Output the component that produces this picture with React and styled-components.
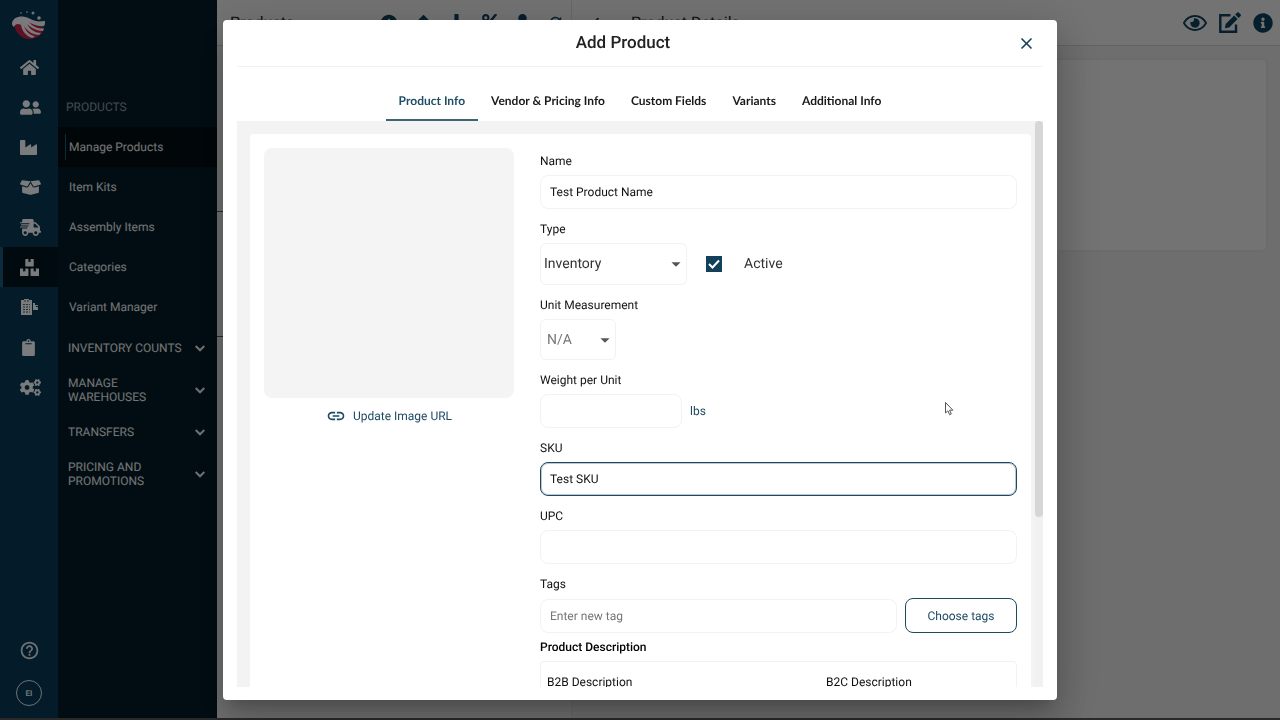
import styled, { createGlobalStyle } from 'styled-components';
import { useState } from 'react';
import {
    FaHome, FaUserFriends, FaIndustry, FaBoxOpen, FaShippingFast, FaBoxes,
    FaClipboard, FaCogs, FaRegEye, FaInfoCircle,
    FaArrowUp, FaDownload, FaPercent, FaUser,
} from 'react-icons/fa';
import {
    MdHelpOutline, MdClose, MdLink, MdRefresh, MdArrowDropDown, MdChevronLeft, MdAddCircle,
} from 'react-icons/md';

const GlobalStyle = createGlobalStyle`
    * {
        box-sizing: border-box;
    }

    body {
        margin: 0;
        font-family: Roboto, 'Liberation Sans', sans-serif;
        font-size: 12px;
        color: #111;
        text-rendering: geometricPrecision;
    }

    button, input, select {
        font-family: inherit;
        font-size: inherit;
        color: inherit;
        text-rendering: inherit;
    }
`;

const Page = styled.div`
    display: flex;
    height: 100vh;
    overflow: hidden;
    background: #dcdcdc;
    border-bottom: 2px solid #555;
`;

/* ---------- side navigation ---------- */

const Rail = styled.nav`
    flex: 0 0 58px;
    display: flex;
    flex-direction: column;
    background: #083752;
`;

const LogoLink = styled.a`
    height: 47px;
    padding-top: 3px;
    display: flex;
    align-items: center;
    justify-content: center;
`;

const RailLink = styled.a`
    height: 40px;
    display: flex;
    align-items: center;
    padding-left: 17px;
    border-left: 3px solid ${props => props.$active ? '#1a5876' : 'transparent'};
    background: ${props => props.$active ? '#03141e' : 'transparent'};
    color: #f4f6f8;
    font-size: ${props => props.$size}px;
`;

const RailFooter = styled.div`
    margin-top: auto;
    padding-bottom: 12px;
    display: flex;
    flex-direction: column;
    align-items: center;
    gap: 19px;
`;

const RailButton = styled.button`
    display: flex;
    padding: 0;
    border: none;
    background: none;
    color: #dfe5e8;
    font-size: 21px;
`;

const Avatar = styled.button`
    width: 26px;
    height: 26px;
    padding: 0;
    border: 1px solid #dfe5e8;
    border-radius: 50%;
    background: none;
    color: #dfe5e8;
    font-size: 8px;
    font-weight: 700;
`;

const SubNav = styled.nav`
    flex: 0 0 159px;
    padding-top: 87px;
    background: #041b27;
    color: #e6e9ea;
`;

const SubNavTitle = styled.h2`
    margin: 0;
    padding-left: 8px;
    font-size: 12px;
    font-weight: 400;
    line-height: 40px;
    color: #87949b;
`;

const SubNavLink = styled.a`
    display: flex;
    align-items: center;
    height: 40px;
    padding: 7px;
    background: ${props => props.$active ? '#020d13' : 'transparent'};
    color: inherit;
    text-decoration: none;

    span {
        padding-left: 3px;
        line-height: 26px;
        border-left: 1px solid ${props => props.$active ? '#1a5876' : 'transparent'};
    }
`;

const SubNavGroup = styled.button`
    display: flex;
    align-items: center;
    justify-content: space-between;
    width: 100%;
    height: 42px;
    padding: 0 12px 0 10px;
    border: none;
    background: none;
    line-height: 14px;
    text-align: left;

    span {
        max-width: 116px;
    }
`;

/* ---------- page behind the dialog ---------- */

const ListPane = styled.section`
    flex: 0 0 355px;
    background: #e2e2e2;
    border-right: 1px solid #cfcfcf;
`;

const DetailPane = styled.main`
    flex: 1;
    min-width: 0;
`;

const PaneHeader = styled.header`
    display: flex;
    align-items: center;
    gap: ${props => props.$wide ? '11px' : '16px'};
    height: 46px;
    padding: 0 7px 0 13px;
    background: #e6e6e6;
    border-bottom: 1px solid #c4c4c4;
    color: #0d3f58;

    h1 {
        flex: 1;
        margin: 0;
        padding-left: ${props => props.$wide ? '13px' : '0'};
        font-size: 16px;
        font-weight: 400;
        color: #222;
    }
`;

const HeaderButton = styled.button`
    display: flex;
    padding: 0;
    border: none;
    background: none;
    font-size: ${props => props.$size || 17}px;
`;

const ListRow = styled.div`
    height: ${props => props.$first ? '166px' : '125px'};
    border-bottom: 1px solid #555;
`;

const DetailCard = styled.div`
    height: 190px;
    margin: 14px;
    border-radius: 4px;
    background: #e6e6e6;
    box-shadow: 0 0 3px #ccc;
`;

/* ---------- dialog ---------- */

const Backdrop = styled.div`
    position: fixed;
    inset: 0;
    display: flex;
    justify-content: center;
    padding: 20px 0;
    background: rgba(0, 0, 0, 0.5);
`;

const Dialog = styled.div`
    display: flex;
    flex-direction: column;
    width: calc(65% + 2px);
    padding: 0 14px 13px;
    border-radius: 4px;
    background: #fff;
    box-shadow: 0 11px 15px -7px rgba(0, 0, 0, 0.2), 0 24px 38px 3px rgba(0, 0, 0, 0.14),
        0 9px 46px 8px rgba(0, 0, 0, 0.12);
`;

const DialogHeader = styled.header`
    display: grid;
    grid-template-columns: 1fr 34px;
    align-items: center;
    height: 47px;
    flex: none;
    border-bottom: 1px solid #f1f1f1;

    h2 {
        margin: 0;
        font-size: 17px;
        font-weight: 500;
        line-height: 22px;
        text-align: center;
        color: #222;
    }
`;

const CloseButton = styled.button`
    display: flex;
    justify-content: center;
    padding: 0;
    border: none;
    background: none;
    color: #12405a;
    font-size: 19px;
`;

const TabList = styled.div`
    display: flex;
    justify-content: center;
    flex: none;
    padding-top: 14px;
`;

const Tab = styled.button`
    height: 40px;
    padding: 0 13px;
    border: none;
    border-bottom: 2px solid ${props => props.$active ? '#3f6377' : 'transparent'};
    background: none;
    font-family: Lato, 'Open Sans', sans-serif;
    font-weight: 700;
    color: ${props => props.$active ? '#1f4e66' : '#1a1a1a'};
`;

const ScrollArea = styled.div`
    display: flex;
    flex: 1;
    min-height: 0;
    background: #f3f3f3;
`;

const ScrollContent = styled.div`
    flex: 1;
    min-width: 0;
    overflow: hidden;
    padding: 13px 4px 0 13px;
`;

const ScrollBar = styled.div`
    flex: 0 0 8px;
    background: #f1f1f1;
`;

const ScrollThumb = styled.div`
    height: 70%;
    border-radius: 4px;
    background: #d6d6d6;
`;

const FormCard = styled.form`
    display: grid;
    grid-template-columns: 250px minmax(0, 1fr);
    gap: 26px;
    align-items: start;
    padding: 13px 14px;
    border-radius: 4px;
    background: #fff;
`;

const ImageColumn = styled.div`
    display: flex;
    flex-direction: column;
    align-items: center;
    gap: 8px;
    padding-top: 1px;
`;

const ImageBox = styled.div`
    width: 100%;
    aspect-ratio: 1;
    border-radius: 8px;
    background: #f4f4f4;
`;

const ImageLink = styled.a`
    display: flex;
    align-items: center;
    gap: 7px;
    color: #1d4a63;
    text-decoration: none;

    svg {
        font-size: 20px;
    }
`;

const Field = styled.div`
    margin-bottom: ${props => props.$tight ? '0' : '6px'};
`;

const Label = styled.label`
    display: block;
    line-height: 28px;
`;

const Row = styled.div`
    display: flex;
    align-items: center;
    gap: ${props => props.$gap || 8}px;
    color: #1d4a63;
`;

const TextInput = styled.input`
    display: block;
    width: ${props => props.$short ? '142px' : '100%'};
    min-width: 0;
    height: 34px;
    padding: 0 9px;
    border: 1px solid #f2f2f2;
    border-radius: 8px;
    outline: none;
    background: #fff;
    color: #111;

    &:focus {
        border: 1px solid #1d4a63;
        box-shadow: inset 0 0 0 1px rgba(29, 74, 99, 0.3);
    }

    &::placeholder {
        color: #757575;
    }
`;

const SelectBox = styled.div`
    position: relative;
    width: ${props => props.$small ? '76px' : '147px'};

    select {
        width: 100%;
        height: ${props => props.$small ? '41px' : '42px'};
        padding: 0 ${props => props.$small ? '6px' : '3px'};
        border: 1px solid #f2f2f2;
        border-radius: 6px;
        appearance: none;
        background: #fff;
        color: ${props => props.$small ? '#777' : '#333'};
        font-size: 14px;
    }

    svg {
        position: absolute;
        top: 10px;
        right: 0;
        color: #555;
        font-size: 22px;
        pointer-events: none;
    }
`;

const CheckLabel = styled.label`
    display: flex;
    align-items: center;
    gap: 22px;
    color: #333;
    font-size: 14px;
`;

const CheckBox = styled.span`
    position: relative;
    display: flex;

    input {
        width: 16px;
        height: 16px;
        margin: 0;
        appearance: none;
        border: 2px solid #12405a;
    }

    input:checked {
        background: #12405a;
    }

    svg {
        position: absolute;
        inset: 0;
        pointer-events: none;
    }
`;

const OutlineButton = styled.button`
    flex: none;
    width: 112px;
    height: 35px;
    border: 1px solid #1d4a63;
    border-radius: 8px;
    background: #fff;
    color: #1d4a63;
`;

const SectionTitle = styled.h3`
    margin: 0;
    font-size: 12px;
    font-weight: 500;
    line-height: 28px;
    color: #000;
`;

const DescriptionBox = styled.div`
    display: grid;
    grid-template-columns: 279px 1fr;
    min-height: 120px;
    padding: 6px;
    border: 1px solid #f2f2f2;
    border-radius: 4px;
`;

const Pointer = styled.svg`
    position: fixed;
    left: 944px;
    top: 401px;
    pointer-events: none;
`;

const Logo = () => (
    <svg width="34" height="30" viewBox="0 0 34 30" aria-label="Home">
        <path d="M2 14 C3 22 9 29 17 29 C25 29 30 25 32 18 L20 13 Z" fill="#c21f45" />
        <path d="M0 13 C1 8 6 6 11 6.500 C16 7 19 10 24 11 C28 12 31 11 33 11 C33 13 33 15 32 16 C26 17 20 14 17 12
            C21 17 27 19 32 18.500 L31 21 C25 21 19 18 15 14 C18 20 24 23 29 23 L27 25 C21 25 15 21 12 16
            C14 22 18 25 23 26.500 L20 28 C14 26 10 21 9 15 C6 13 3 14 2 17 C0 16 0 14 0 13 Z" fill="#f5f3f6" />
        <circle cx="9" cy="3" r="1" fill="#8fb0c8" />
        <circle cx="15" cy="2" r="1" fill="#8fb0c8" />
        <circle cx="21" cy="3" r="1.500" fill="#d7e3ec" />
        <circle cx="27" cy="8" r="1.800" fill="#eef3f6" />
    </svg>
);

const ReportIcon = () => (
    <svg width="19" height="18" viewBox="0 0 19 18" fill="currentColor">
        <path d="M1 2h3V1h5v1h3v15H1z" />
        <path d="M13 5h2v2h3v1h-2v1h2v3h-5z" />
        <path d="M4 3h5M3 6.500h7M3 9h7M3 11.500h7M3 14h7" stroke="#44606f" strokeDasharray="2 1" />
    </svg>
);

const EditIcon = () => (
    <svg width="24" height="22" viewBox="0 0 24 22" fill="currentColor">
        <path d="M12.500 3.200H2.300V19.700H18V12.500" fill="none" stroke="currentColor" strokeWidth="2.400" />
        <path d="M16.200 3.600 19.600 7 11.200 15.400 6.800 16.300 7.700 12z" />
        <path d="M17.200 2.600 19.300 .5Q20 0 20.700 .5L22.700 2.500Q23.300 3.200 22.700 3.900L20.600 6z" />
    </svg>
);

const Chevron = () => (
    <svg width="10" height="7" viewBox="0 0 10 7" fill="none" stroke="currentColor" strokeWidth="2">
        <path d="M0.700 1 5 5.300 9.300 1" />
    </svg>
);

const railItems = [
    { name: 'Dashboard', Icon: FaHome, size: 19 },
    { name: 'Customers', Icon: FaUserFriends, size: 21 },
    { name: 'Vendors', Icon: FaIndustry, size: 17 },
    { name: 'Orders', Icon: FaBoxOpen, size: 21 },
    { name: 'Shipping', Icon: FaShippingFast, size: 21 },
    { name: 'Products', Icon: FaBoxes, size: 19, active: true },
    { name: 'Reports', Icon: ReportIcon, size: 19 },
    { name: 'Tasks', Icon: FaClipboard, size: 17 },
    { name: 'Settings', Icon: FaCogs, size: 21 },
];

const productLinks = ['Manage Products', 'Item Kits', 'Assembly Items', 'Categories', 'Variant Manager'];
const navGroups = ['INVENTORY COUNTS', 'MANAGE WAREHOUSES', 'TRANSFERS', 'PRICING AND PROMOTIONS'];
const listActions = [FaArrowUp, FaDownload, FaPercent, FaUser, MdRefresh];
const tabs = ['Product Info', 'Vendor & Pricing Info', 'Custom Fields', 'Variants', 'Additional Info'];

const SideNav = () => (
    <>
        <Rail>
            <LogoLink href="#"><Logo /></LogoLink>
            {railItems.map(({ name, Icon, size, active }) => (
                <RailLink key={name} href="#" aria-label={name} $size={size} $active={active}><Icon /></RailLink>
            ))}
            <RailFooter>
                <RailButton aria-label="Help"><MdHelpOutline /></RailButton>
                <Avatar>EI</Avatar>
            </RailFooter>
        </Rail>
        <SubNav>
            <SubNavTitle>PRODUCTS</SubNavTitle>
            {productLinks.map((link, i) => (
                <SubNavLink key={link} href="#" $active={i === 0}><span>{link}</span></SubNavLink>
            ))}
            {navGroups.map(group => (
                <SubNavGroup key={group}><span>{group}</span><Chevron /></SubNavGroup>
            ))}
        </SubNav>
    </>
);

const ProductForm = () => {
    const [name, setName] = useState('Test Product Name');
    const [sku, setSku] = useState('Test SKU');
    const [active, setActive] = useState(true);

    return (
        <FormCard onSubmit={(e) => e.preventDefault()}>
            <ImageColumn>
                <ImageBox />
                <ImageLink href="#"><MdLink />Update Image URL</ImageLink>
            </ImageColumn>
            <div>
                <Field>
                    <Label htmlFor="name">Name</Label>
                    <TextInput id="name" value={name} onChange={(e) => setName(e.target.value)} />
                </Field>
                <Field>
                    <Label htmlFor="type">Type</Label>
                    <Row $gap={19}>
                        <SelectBox>
                            <select id="type"><option>Inventory</option></select>
                            <MdArrowDropDown />
                        </SelectBox>
                        <CheckLabel>
                            <CheckBox>
                                <input type="checkbox" checked={active} onChange={() => setActive(!active)} />
                                <svg width="16" height="16" fill="none" stroke="#fff" strokeWidth="2">
                                    <path d="M3 8 6.500 11.500 13 4.500" />
                                </svg>
                            </CheckBox>
                            Active
                        </CheckLabel>
                    </Row>
                </Field>
                <Field>
                    <Label htmlFor="unit">Unit Measurement</Label>
                    <SelectBox $small>
                        <select id="unit"><option>N/A</option></select>
                        <MdArrowDropDown />
                    </SelectBox>
                </Field>
                <Field>
                    <Label htmlFor="weight">Weight per Unit</Label>
                    <Row><TextInput id="weight" $short />lbs</Row>
                </Field>
                <Field>
                    <Label htmlFor="sku">SKU</Label>
                    <TextInput id="sku" autoFocus value={sku} onChange={(e) => setSku(e.target.value)} />
                </Field>
                <Field>
                    <Label htmlFor="upc">UPC</Label>
                    <TextInput id="upc" />
                </Field>
                <Field $tight>
                    <Label htmlFor="tags">Tags</Label>
                    <Row>
                        <TextInput id="tags" placeholder="Enter new tag" />
                        <OutlineButton type="button">Choose tags</OutlineButton>
                    </Row>
                </Field>
                <SectionTitle>Product Description</SectionTitle>
                <DescriptionBox>
                    <Label as="span">B2B Description</Label>
                    <Label as="span">B2C Description</Label>
                </DescriptionBox>
            </div>
        </FormCard>
    );
};

const AddProductDialog = () => {
    const [tab, setTab] = useState(tabs[0]);

    return (
        <Backdrop>
            <Dialog role="dialog" aria-labelledby="dialog-title">
                <DialogHeader>
                    <h2 id="dialog-title">Add Product</h2>
                    <CloseButton aria-label="Close"><MdClose /></CloseButton>
                </DialogHeader>
                <TabList role="tablist">
                    {tabs.map(t => (
                        <Tab key={t} role="tab" aria-selected={t === tab} $active={t === tab} onClick={() => setTab(t)}>
                            {t}
                        </Tab>
                    ))}
                </TabList>
                <ScrollArea>
                    <ScrollContent><ProductForm /></ScrollContent>
                    <ScrollBar><ScrollThumb /></ScrollBar>
                </ScrollArea>
            </Dialog>
        </Backdrop>
    );
};

const App = () => (
    <>
        <GlobalStyle />
        <Page>
            <SideNav />
            <ListPane>
                <PaneHeader>
                    <h1>Products</h1>
                    <HeaderButton $size={20} aria-label="Add"><MdAddCircle /></HeaderButton>
                    {listActions.map((Icon, i) => <HeaderButton key={i}><Icon /></HeaderButton>)}
                </PaneHeader>
                <ListRow $first />
                <ListRow />
            </ListPane>
            <DetailPane>
                <PaneHeader $wide>
                    <HeaderButton $size={22} aria-label="Back"><MdChevronLeft /></HeaderButton>
                    <h1>Product Details</h1>
                    <HeaderButton $size={24} aria-label="View"><FaRegEye /></HeaderButton>
                    <HeaderButton aria-label="Edit"><EditIcon /></HeaderButton>
                    <HeaderButton $size={20} aria-label="Info"><FaInfoCircle /></HeaderButton>
                </PaneHeader>
                <DetailCard />
            </DetailPane>
        </Page>
        <AddProductDialog />
        <Pointer width="10" height="16" viewBox="0 0 10 16">
            <path d="M1.500 1.500v10.500l2.400-2.200 1.700 3.900 1.700-.8-1.700-3.700h3.300z" fill="#fff" stroke="#555" />
        </Pointer>
    </>
);

export default App;
